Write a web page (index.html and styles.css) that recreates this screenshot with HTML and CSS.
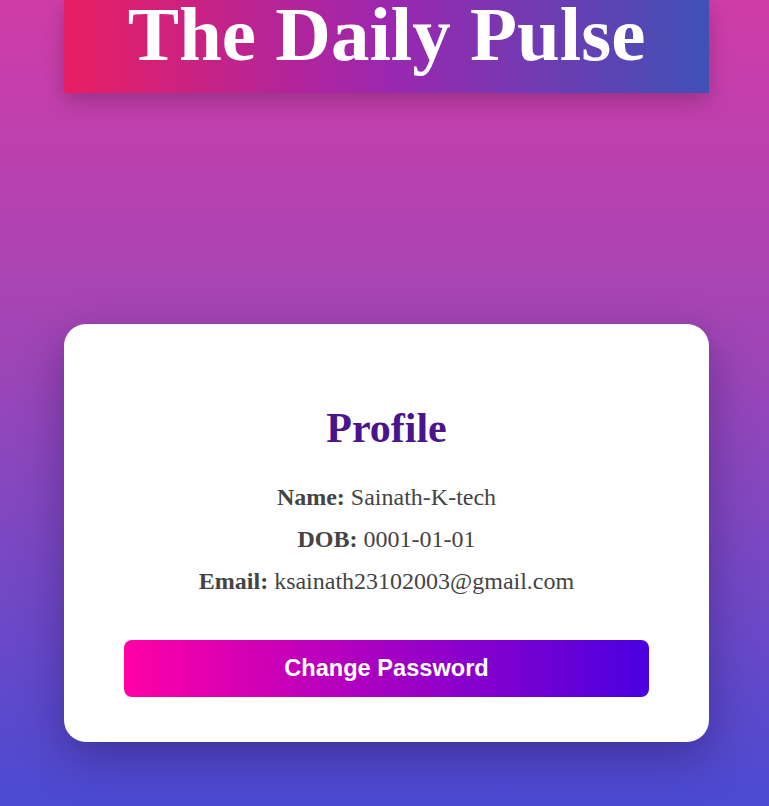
FILE: index.html
```html
<!DOCTYPE html>
<html lang="en">
<head>
<meta charset="utf-8">
<title>The Daily Pulse - Profile</title>
<link rel="stylesheet" href="styles.css">
</head>
<body>
<div class="page">
  <header class="masthead">
    <h1 class="masthead-title">The Daily Pulse</h1>
  </header>
  <section class="profile-card">
    <h2 class="profile-title">Profile</h2>
    <div class="profile-info">
      <p class="info-row"><strong>Name:</strong> Sainath-K-tech</p>
      <p class="info-row"><strong>DOB:</strong> 0001-01-01</p>
      <p class="info-row"><strong>Email:</strong> ksainath23102003@gmail.com</p>
    </div>
    <button class="change-btn" type="button">Change Password</button>
  </section>
</div>
</body>
</html>
```
FILE: styles.css
```css
html, body {
  margin: 0;
  padding: 0;
}
body {
  min-height: 806px;
  background: linear-gradient(to bottom, #d03ca8 0%, #a445b5 40%, #4a4ad2 100%);
  font-family: "Liberation Serif", "Times New Roman", serif;
  overflow: hidden;
}
.page {
  width: 645px;
  margin-left: 64px;
  display: flex;
  flex-direction: column;
}
.masthead {
  background: linear-gradient(to right, #e91e63, #9c27b0, #3f51b5);
  padding: 0 0 25px;
  box-shadow: 0 8px 20px rgba(0, 0, 0, 0.22);
  text-align: center;
}
.masthead-title {
  margin: 0;
  font-size: 77px;
  line-height: 68px;
  font-weight: bold;
  color: #fff;
}
.profile-card {
  margin-top: 231px;
  background: #fff;
  border-radius: 22px;
  padding: 80px 60px 45px;
  box-shadow: 0 15px 45px rgba(20, 10, 60, 0.35);
  display: flex;
  flex-direction: column;
  align-items: stretch;
  text-align: center;
}
.profile-title {
  margin: 0;
  font-size: 42px;
  line-height: 48px;
  font-weight: bold;
  color: #4a148c;
}
.profile-info {
  margin-top: 31px;
  display: flex;
  flex-direction: column;
  gap: 14px;
}
.info-row {
  margin: 0;
  font-size: 24px;
  line-height: 28px;
  color: #444;
}
.info-row strong {
  font-weight: bold;
}
.change-btn {
  margin-top: 45px;
  height: 57px;
  border: none;
  border-radius: 8px;
  background: linear-gradient(to right, #ff00a6, #4a00e0);
  color: #fff;
  font-family: "Liberation Sans", Arial, sans-serif;
  font-weight: bold;
  font-size: 23.6px;
  cursor: pointer;
  padding: 0;
}
```
